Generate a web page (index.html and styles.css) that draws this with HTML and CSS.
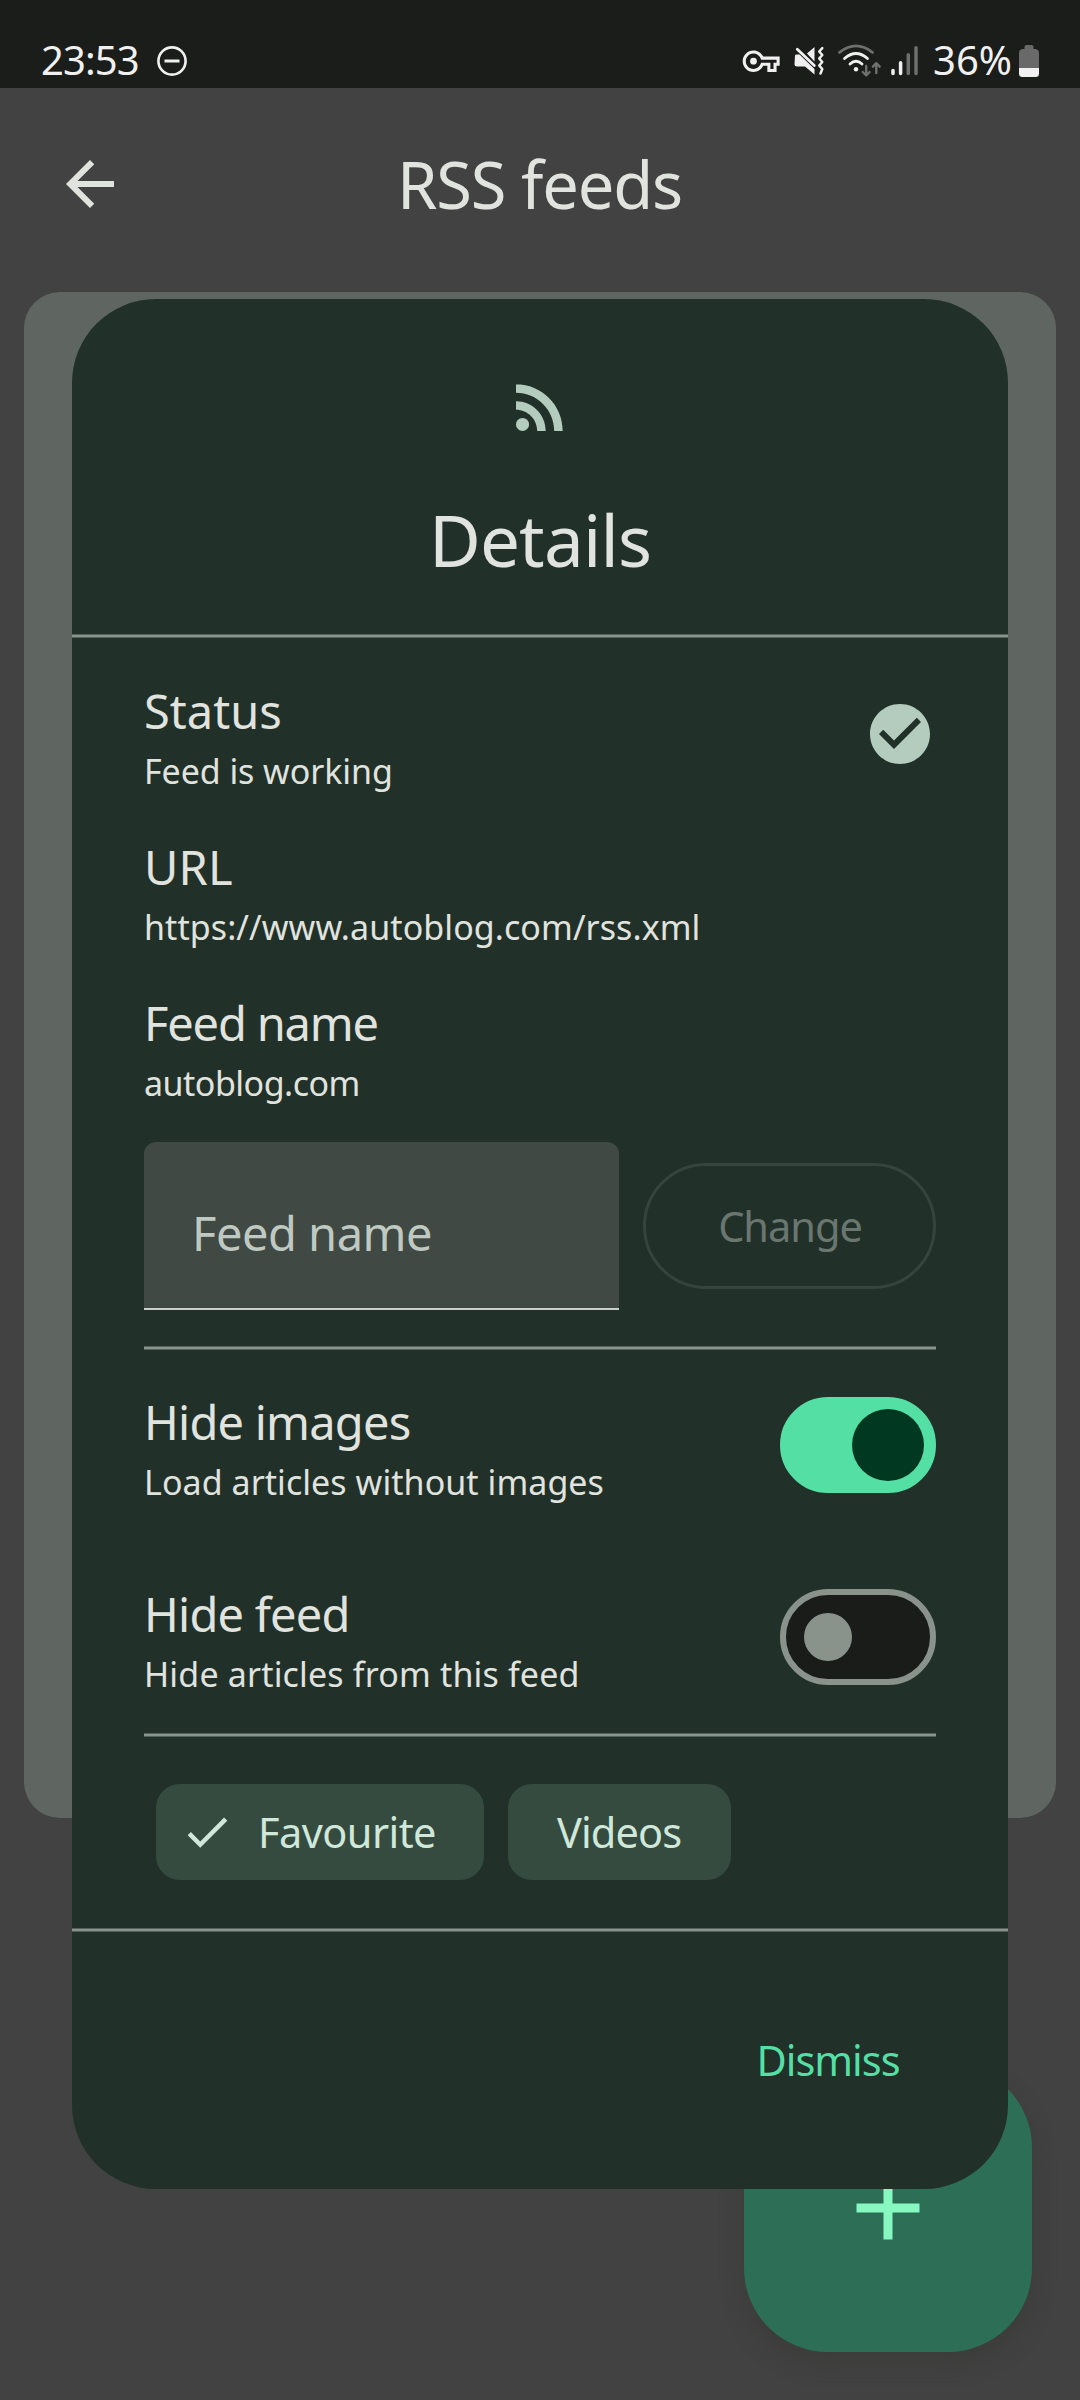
FILE: index.html
```html
<!DOCTYPE html>
<html lang="en">
<head>
<meta charset="utf-8">
<title>RSS feeds</title>
<link rel="stylesheet" href="styles.css">
</head>
<body>
<div class="screen">
  <header class="status-bar">
    <div class="status-left">
      <span class="clock">23:53</span>
      <svg class="dnd" width="32" height="32" viewBox="0 0 32 32" fill="none" stroke="#f0f0f0" stroke-width="2.6"><circle cx="16" cy="16" r="13.6"/><path d="M8.5 16h15" stroke-width="3"/></svg>
    </div>
    <div class="status-right">
      <svg width="150" height="50" viewBox="0 0 150 50" fill="none">
        <g fill="#f0f0f0" transform="translate(7.700 7.700) scale(1.540)"><path d="M22 19h-6v-4h-2.680c-1.140 2.420-3.600 4-6.320 4-3.860 0-7-3.140-7-7s3.140-7 7-7c2.720 0 5.170 1.580 6.320 4H24v6h-2v4zm-4-2h2v-4h2v-2H11.940l-.23-.67C11.010 8.340 9.110 7 7 7c-2.760 0-5 2.240-5 5s2.240 5 5 5c2.110 0 4.010-1.340 4.710-3.330l.23-.67H18v4z"/><circle cx="7" cy="12" r="2.200"/></g>
        <path fill="#f0f0f0" d="M60 20.500Q60 19.500 62 19.500H64.500L79.500 34V39.500L70 31.500H62Q59.500 31.500 59.500 29.500ZM72 18.500L79.500 12V26.500Z"/>
        <path stroke="#f0f0f0" stroke-width="2.800" stroke-linecap="round" d="M62.300 14.300L79.300 30.500"/>
        <path stroke="#f0f0f0" stroke-width="2.500" stroke-linecap="round" stroke-linejoin="round" d="M87.300 13.200L84.200 16.500L87.300 20L84.200 23.500L87.300 27L84.200 30.500L87.300 34L85.500 38.500"/>
        <g stroke-linecap="round" stroke-width="2.800">
          <path stroke="#6e6f6e" d="M104.500 17.300Q121 4.500 137.500 17.300"/>
          <path stroke="#f0f0f0" d="M109.500 23.500Q121 13.500 132.500 23.500M115 29Q121 23.500 127 29"/>
        </g>
        <circle cx="121" cy="34.300" r="2.200" fill="#f0f0f0"/>
        <path stroke="#6e6f6e" stroke-width="2.400" stroke-linecap="round" stroke-linejoin="round" d="M131.200 31V40M127.800 37L131.200 40.500L134.600 37M141.300 38V28.500M137.900 31.700L141.300 28.200L144.700 31.700"/>
      </svg>
      <svg width="40" height="50" viewBox="0 0 40 50" stroke-width="3.500" stroke-linecap="round">
        <path stroke="#f0f0f0" d="M8 35.500v3M15.600 27.700v10.800"/><path stroke="#6e6f6e" d="M23.300 19.700v18.800M31 12.700v25.800"/>
      </svg>
      <span class="percent">36%</span>
      <svg class="battery" width="20" height="32" viewBox="0 0 20 32"><path fill="#686968" d="M5.500 2Q5.500 0 7.500 0H12.500Q14.500 0 14.500 2V4H17Q20 5 20 8V24H0V8Q0 5 3 4H5.500Z"/><path fill="#f0f0f0" d="M0 23H20V28.500Q20 32 16.500 32H3.500Q0 32 0 28.500Z"/></svg>
    </div>
  </header>

  <nav class="app-bar">
    <svg class="back" width="72" height="72" viewBox="0 0 24 24"><path fill="#e1e3df" d="M20 11H7.830l5.590-5.590L12 4l-8 8 8 8 1.410-1.410L7.830 13H20z"/></svg>
    <h1>RSS feeds</h1>
  </nav>

  <main class="feed-list"></main>

  <button class="fab" aria-label="Add">
    <svg width="108" height="108" viewBox="0 0 24 24"><path fill="#87f8c0" d="M19 13h-6v6h-2v-6H5v-2h6V5h2v6h6z"/></svg>
  </button>

  <section class="dialog">
    <div class="dialog-head">
      <svg width="72" height="72" viewBox="0 0 24 24" fill="#b3ccbd"><circle cx="6.180" cy="17.820" r="2.180"/><path d="M4 4.440v2.830c7.030 0 12.730 5.700 12.730 12.730h2.830c0-8.590-6.970-15.560-15.560-15.560zm0 5.660v2.830c3.900 0 7.070 3.170 7.070 7.070h2.830c0-5.470-4.430-9.900-9.900-9.900z"/></svg>
      <h2>Details</h2>
    </div>
    <hr class="divider">
    <div class="dialog-body">
      <div class="row">
        <div class="label">
          <div class="title t-status">Status</div>
          <div class="sub">Feed is working</div>
        </div>
        <svg class="ok" width="72" height="72" viewBox="0 0 24 24"><path fill="#b3ccbd" d="M12 2C6.480 2 2 6.480 2 12s4.480 10 10 10 10-4.480 10-10S17.520 2 12 2zm-2 15l-5-5 1.410-1.410L10 14.170l7.590-7.590L19 8l-9 9z"/></svg>
      </div>
      <div class="row">
        <div class="label">
          <div class="title t-url">URL</div>
          <div class="sub s-url">https://www.autoblog.com/rss.xml</div>
        </div>
      </div>
      <div class="row">
        <div class="label">
          <div class="title t-name">Feed name</div>
          <div class="sub s-name">autoblog.com</div>
        </div>
      </div>
      <div class="rename">
        <div class="field">Feed name</div>
        <button class="change" disabled>Change</button>
      </div>
      <hr class="divider">
      <div class="switches">
        <div class="row">
          <div class="label">
            <div class="title">Hide images</div>
            <div class="sub s-load">Load articles without images</div>
          </div>
          <div class="switch on"><i></i></div>
        </div>
        <div class="row">
          <div class="label">
            <div class="title">Hide feed</div>
            <div class="sub s-hide">Hide articles from this feed</div>
          </div>
          <div class="switch"><i></i></div>
        </div>
      </div>
      <hr class="divider">
      <div class="chips">
        <div class="chip checked">
          <svg width="54" height="54" viewBox="0 0 24 24"><path fill="#d0e8d9" d="M9 16.170L4.830 12l-1.420 1.410L9 19 21 7l-1.410-1.410z"/></svg>
          <span>Favourite</span>
        </div>
        <div class="chip">Videos</div>
      </div>
    </div>
    <hr class="divider">
    <div class="dialog-foot"><button class="dismiss">Dismiss</button></div>
  </section>
</div>
</body>
</html>
```
FILE: styles.css
```css
* { box-sizing: border-box; margin: 0; padding: 0; }
body { background: #414241; font-family: "Noto Sans", "Open Sans", sans-serif; color: #e1e3df; }
svg { display: block; flex: none; }
button { font: inherit; border: 0; background: none; }
h1, h2 { font-weight: 400; }

.screen { position: relative; width: 1080px; height: 2400px; overflow: hidden; background: #414241; }

.status-bar { height: 88px; background: #1b1d1b; color: #f0f0f0; display: flex; justify-content: space-between; }
.status-left, .status-right { display: flex; align-items: flex-start; padding-top: 35px; }
.status-left { padding-left: 41px; gap: 19px; }
.status-right { padding-right: 41px; }
.clock, .percent { font-size: 40px; line-height: 50px; }
.clock { letter-spacing: -.900px; width: 96px; }
.dnd { margin-top: 10px; }
.percent { width: 79px; margin-left: 8px; letter-spacing: 0; }
.battery { margin-top: 10px; margin-left: 7px; }

.app-bar { height: 192px; display: grid; grid-template-columns: 72px 1fr 72px; align-items: center; padding: 0 54px; }
.app-bar h1 { text-align: center; font-size: 65px; line-height: 90px; letter-spacing: -1.140px; padding: 0 1px 1px 0; }

.feed-list { margin: 12px 24px 0; height: 1526px; border-radius: 36px; background: #5f6661; }

.fab { position: absolute; left: 744px; top: 2064px; width: 288px; height: 288px; border-radius: 84px; background: #2d6f56; display: grid; place-items: center; box-shadow: 0 12px 24px rgba(50, 48, 46, .3); }

.dialog { position: absolute; left: 72px; top: 299px; width: 936px; height: 1890px; border-radius: 84px; background: #21312a; display: flex; flex-direction: column; overflow: hidden; }
.dialog-head { height: 335px; padding-top: 72px; display: flex; flex-direction: column; align-items: center; gap: 49px; }
.dialog-head h2 { font-size: 71px; line-height: 96px; letter-spacing: -.820px; }
.divider { flex: none; height: 4px; border: solid #55625b; border-width: 1px 0; background: #89938c; }

.dialog-body { padding: 36px 72px 48px; }
.row { display: flex; justify-content: space-between; height: 120px; margin-bottom: 36px; }
.label { padding-top: 1px; }
.title { font-size: 47px; line-height: 72px; letter-spacing: -.780px; }
.sub { font-size: 34px; line-height: 48px; letter-spacing: -.070px; }
.t-status { letter-spacing: .040px; }
.t-url { letter-spacing: .200px; }
.t-name { letter-spacing: -1.170px; }
.s-url { letter-spacing: .080px; }
.s-name { letter-spacing: -.500px; }
.s-load { letter-spacing: .060px; }
.s-hide { letter-spacing: .170px; }
.ok { margin: 24px 0 0; }

.rename { display: flex; align-items: center; gap: 24px; margin-bottom: 36px; }
.field { width: 475px; height: 168px; padding: 55px 48px 0 48px; border-radius: 12px 12px 0 0; background: #404943; border-bottom: 2px solid #c9cfca; color: #bfc9c1; font-size: 47px; line-height: 72px; letter-spacing: -.490px; }
.change { width: 293px; height: 126px; border: 3px solid #35453e; border-radius: 63px; color: #6a766f; font-size: 41.500px; letter-spacing: -1px; padding-left: 1px; }

.switches { display: flex; flex-direction: column; gap: 72px; padding: 35px 0 36px; }
.switches .row { margin: 0; align-items: center; }
.switches .label { padding-top: 2px; }
.switch { width: 156px; height: 96px; border-radius: 48px; background: #1a1c1a; border: 6px solid #89938c; display: flex; align-items: center; padding-left: 18px; }
.switch i { width: 48px; height: 48px; border-radius: 50%; background: #89938c; }
.switch.on { background: #54dfa4; border-color: #54dfa4; justify-content: flex-end; padding: 0 6px 0 0; }
.switch.on i { width: 72px; height: 72px; background: #003822; }

.chips { display: flex; gap: 24px; padding: 47px 0 0 12px; }
.chip { height: 96px; border-radius: 24px; background: #354b40; color: #d0e8d9; font-size: 41.500px; line-height: 97px; padding-left: 49px; width: 223px; letter-spacing: -.900px; }
.chip.checked { display: flex; align-items: center; width: 328px; padding-left: 24px; gap: 24px; letter-spacing: -.550px; }

.dialog-foot { display: flex; justify-content: flex-end; padding: 68px 72px 0; }
.dismiss { height: 120px; width: 216px; color: #54dfa4; font-size: 41.500px; line-height: 118px; letter-spacing: -1px; }
```
